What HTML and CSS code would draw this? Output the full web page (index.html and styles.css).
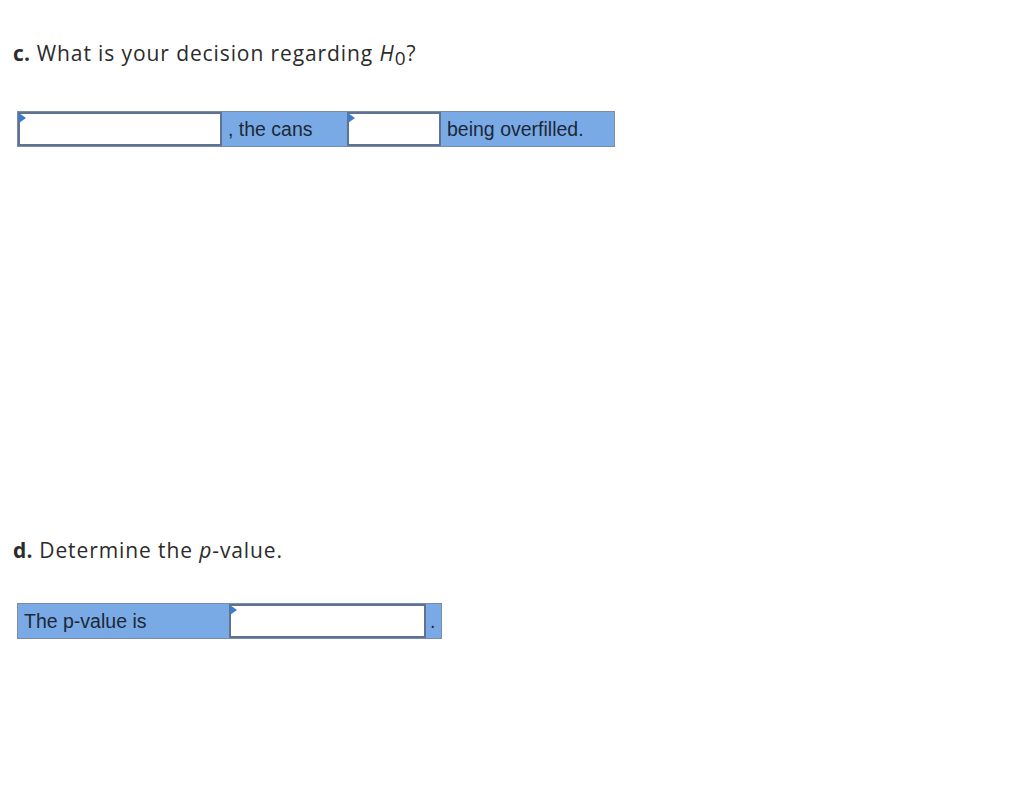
FILE: index.html
```html
<!DOCTYPE html>
<html>
<head>
<meta charset="utf-8">
<link rel="stylesheet" href="styles.css">
</head>
<body>
<div class="page">
  <p class="question q-c"><b>c.</b> What is your decision regarding <i>H</i><sub>0</sub>?</p>
  <div class="answer row-c">
    <div class="input w1"><span class="flag"></span></div>
    <div class="label w2">, the cans</div>
    <div class="input w3"><span class="flag"></span></div>
    <div class="label w4">being overfilled.</div>
  </div>
  <p class="question q-d"><b>d.</b> Determine the <i>p</i>-value.</p>
  <div class="answer row-d">
    <div class="label w5">The p-value is</div>
    <div class="input w6"><span class="flag"></span></div>
    <div class="label w7">.</div>
  </div>
</div>
</body>
</html>
```
FILE: styles.css
```css
html, body {
  margin: 0;
  padding: 0;
  background: #ffffff;
}
.page {
  padding: 38px 0 0 13px;
}
.question {
  margin: 0;
  font-family: "Open Sans", Lato, sans-serif;
  font-size: 21px;
  letter-spacing: 0.9px;
  line-height: 30px;
  color: #2b2b2b;
}
.question b {
  font-weight: 700;
  letter-spacing: 0.3px;
}
.question sub {
  font-size: 19px;
  vertical-align: -4px;
  line-height: 0;
}
.answer {
  display: inline-flex;
  margin-left: 4px;
  border: 1px solid #7c8ca3;
  background: #7aaae6;
  height: 34px;
}
.row-c {
  margin-top: 43px;
}
.q-d {
  margin-top: 385px;
}
.row-d {
  margin-top: 38px;
}
.label {
  font-family: "Liberation Sans", Arial, sans-serif;
  font-size: 19.5px;
  color: #1c2836;
  display: flex;
  align-items: center;
  padding-left: 6px;
  box-sizing: border-box;
  white-space: nowrap;
}
.input {
  position: relative;
  background: #ffffff;
  border: 2px solid #5e7393;
  box-sizing: border-box;
}
.flag {
  position: absolute;
  left: -1px;
  top: -1px;
  width: 0;
  height: 0;
  border-top: 5px solid transparent;
  border-bottom: 5px solid transparent;
  border-left: 7px solid #3d7cc6;
}
.w1 { width: 204px; }
.w2 { width: 125px; }
.w3 { width: 94px; }
.w4 { width: 173px; }
.w5 { width: 211px; }
.w6 { width: 197px; }
.w7 { width: 15px; padding-left: 4px; }
```
